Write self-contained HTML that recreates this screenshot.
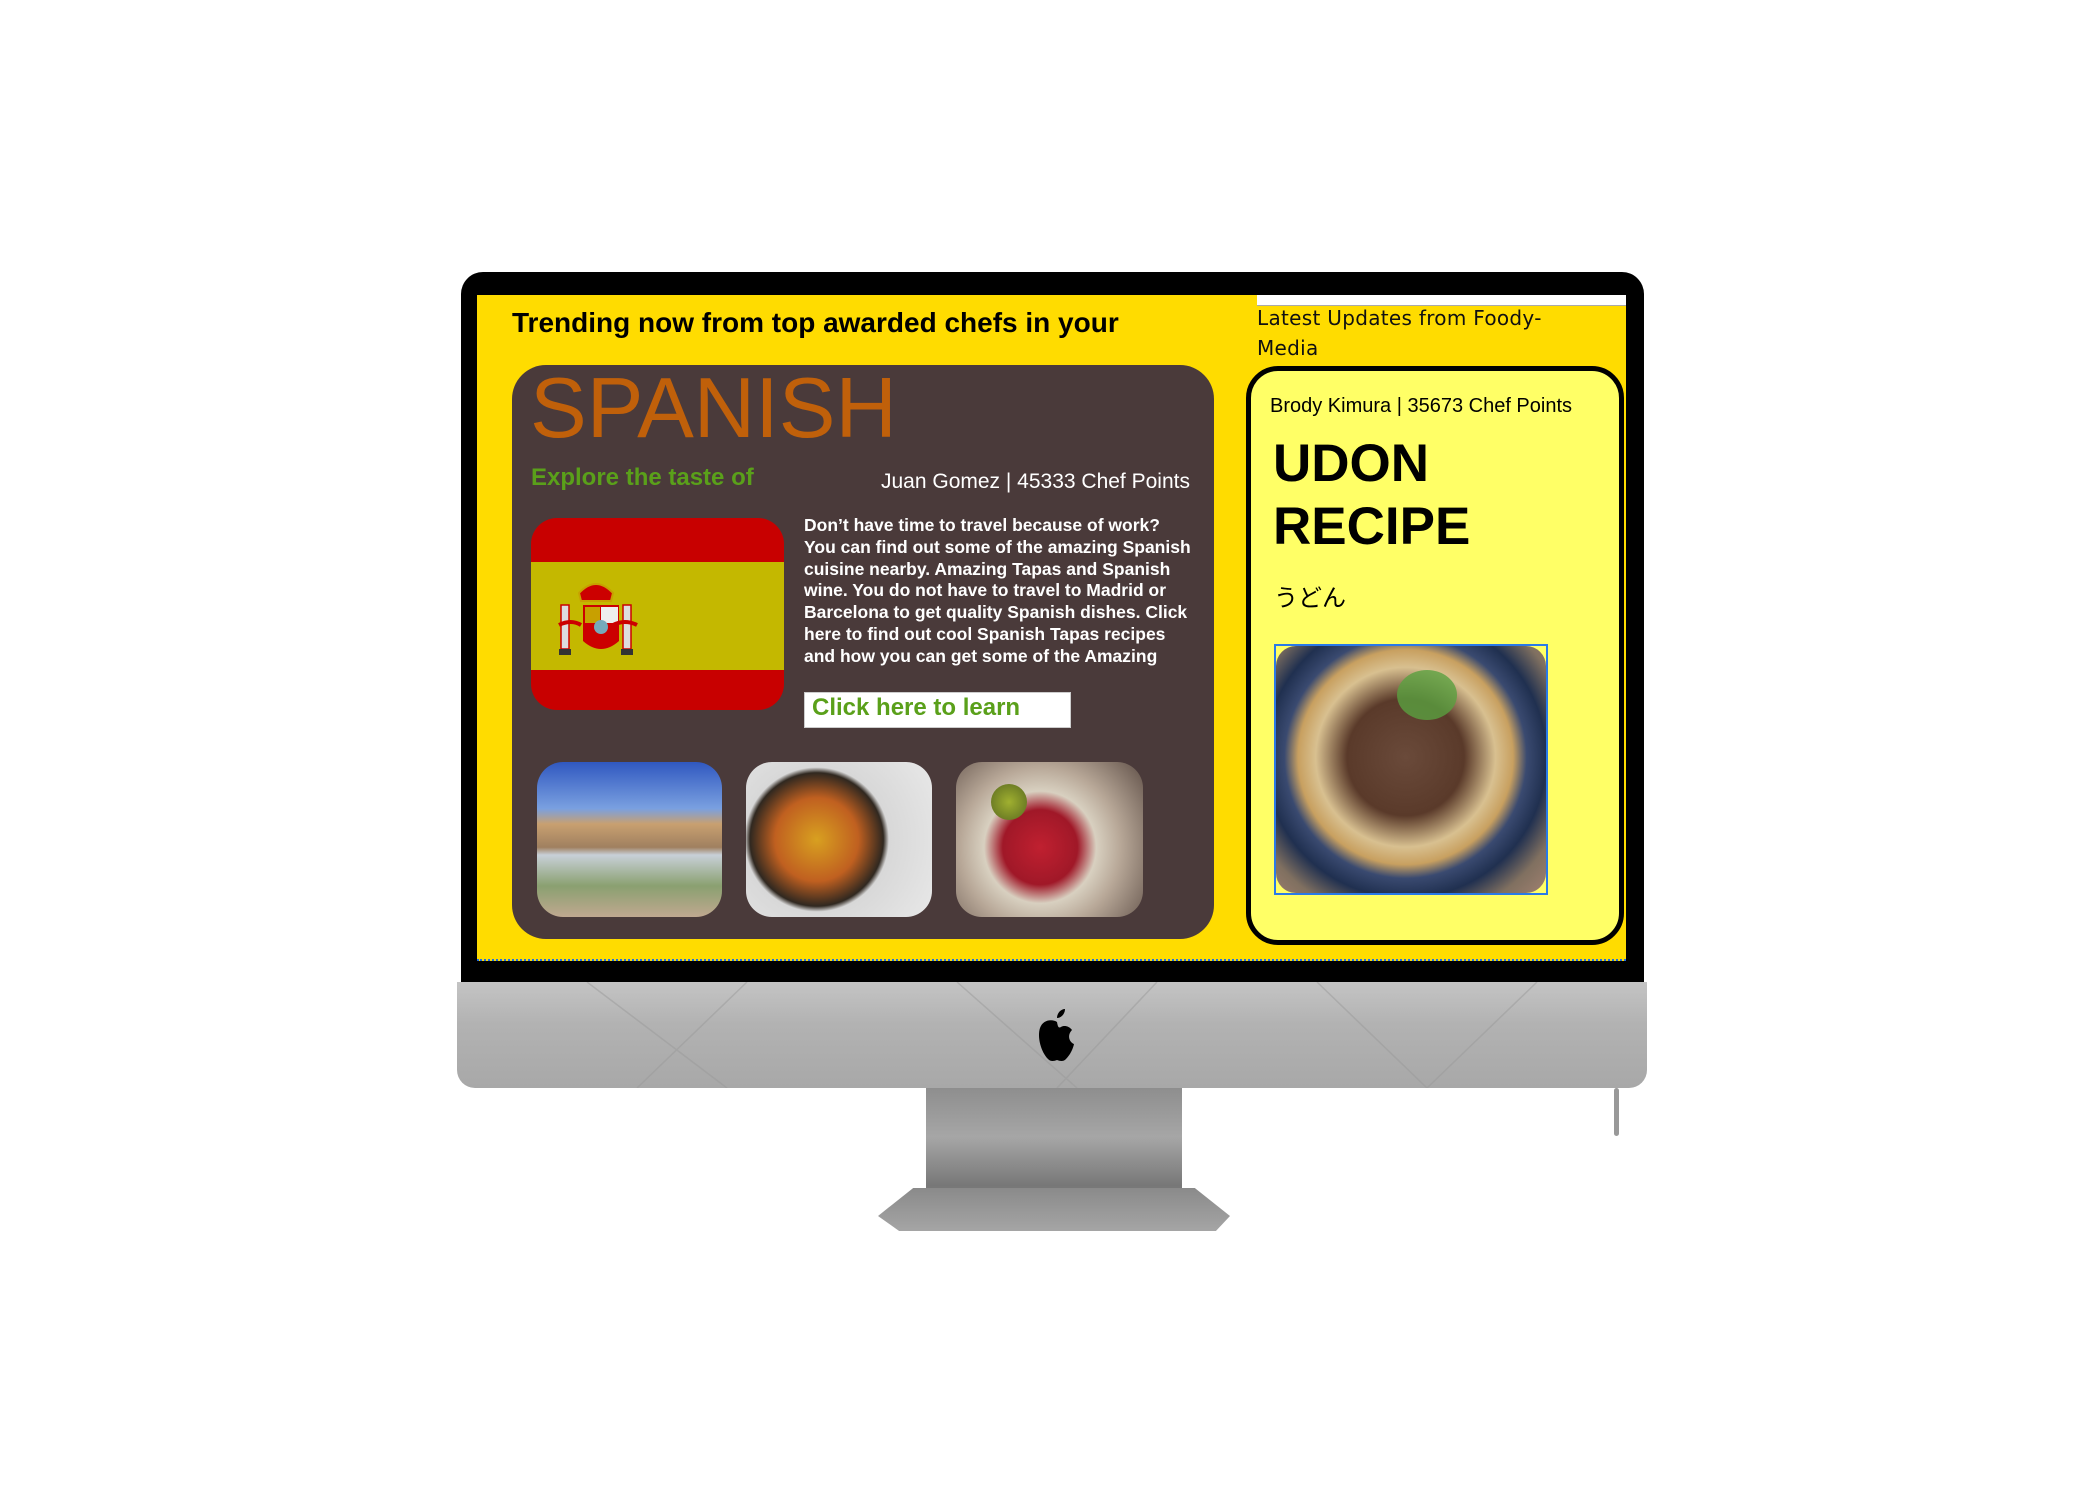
<!DOCTYPE html>
<html><head><meta charset="utf-8"><style>
*{margin:0;padding:0;box-sizing:border-box}
body{width:2100px;height:1500px;background:#fff;position:relative;overflow:hidden;font-family:"Liberation Sans",Arial,sans-serif}
.a{position:absolute}
.t{white-space:nowrap}
</style></head><body>
<div class="a" style="left:461px;top:272px;width:1183px;height:712px;background:#000;border-radius:22px 22px 0 0"></div>
<div class="a" style="left:457px;top:982px;width:1190px;height:106px;background:linear-gradient(#c4c4c4,#b2b2b2 40%,#a8a8a8);border-radius:0 0 18px 18px"></div>
<svg class="a" style="left:457px;top:982px" width="1190" height="106"><g stroke="#999" stroke-width="1.5" opacity=".5" fill="none"><path d="M130 0 L270 106 M290 0 L180 106 M500 0 L620 106 M700 0 L600 106 M860 0 L970 106 M1080 0 L970 106"/></g></svg>
<svg class="a" style="left:1034px;top:1007px" width="46" height="56" viewBox="0 0 46 56"><path d="M31 2c0 5-4 9-8 9 0-5 4-9 8-9z" fill="#000"/><path d="M23 15c-4-3-14-3-17 6-3 9 1 24 8 31 3 3 6 2 9 1 3 1 6 2 9-1 4-4 7-10 8-15-5-2-7-9-2-14-3-4-8-5-11-3-2 1-3 1-4-5z" fill="#000"/></svg>
<div class="a" style="left:926px;top:1088px;width:256px;height:140px;background:linear-gradient(#8e8e8e,#a6a6a6 35%,#777 70%,#999);clip-path:polygon(0 0,100% 0,102% 70%,118% 100%,-12% 100%,-2% 70%)"></div>
<div class="a" style="left:878px;top:1188px;width:352px;height:43px;background:linear-gradient(#8a8a8a,#a5a5a5);clip-path:polygon(10% 0,90% 0,100% 65%,96% 100%,6% 100%,0 65%)"></div>
<div class="a" style="left:1614px;top:1088px;width:5px;height:48px;background:#999;border-radius:3px"></div>
<div class="a" style="left:477px;top:295px;width:1149px;height:666px;background:#ffdc00;border-bottom:2px dotted #1e6ee8"></div>
<div class="a" style="left:1257px;top:295px;width:369px;height:11px;background:#fff;border-bottom:1px solid #aaa"></div>
<div class="a t" style="left:512px;top:307px;font-size:28px;font-weight:bold;color:#000">Trending now from top awarded chefs in your</div>
<div class="a" style="left:1257px;top:303px;font-family:'DejaVu Sans',sans-serif;font-size:20px;line-height:30px;color:#111;letter-spacing:.3px">Latest Updates from Foody-<br>Media</div>
<div class="a" style="left:512px;top:365px;width:702px;height:574px;background:#4a3a3a;border-radius:34px"></div>
<div class="a t" style="left:530px;top:361px;font-size:85px;color:#c0600a;line-height:96px">SPANISH</div>
<div class="a t" style="left:531px;top:464px;font-size:24px;font-weight:bold;color:#5aa01a">Explore the taste of</div>
<div class="a t" style="left:881px;top:470px;font-size:21px;color:#fff">Juan Gomez | 45333 Chef Points</div>
<div class="a" style="left:531px;top:518px;width:253px;height:192px;border-radius:26px;overflow:hidden;background:linear-gradient(#c80000 0 44px,#c4b800 44px 152px,#c80000 152px)"></div>
<svg class="a" style="left:557px;top:575px" width="84" height="90" viewBox="0 0 84 90"><rect x="4" y="30" width="8" height="44" fill="#ddd" stroke="#c00" stroke-width="1.5"/><rect x="66" y="30" width="8" height="44" fill="#ddd" stroke="#c00" stroke-width="1.5"/><path d="M22 18 Q39 0 56 18 L54 26 H24z" fill="#c00" stroke="#c8a000" stroke-width="2"/><path d="M26 30 H62 V66 Q44 82 26 66z" fill="#c00"/><rect x="44" y="32" width="17" height="16" fill="#eee"/><rect x="28" y="32" width="15" height="16" fill="#c8a000"/><circle cx="44" cy="52" r="7" fill="#7ab"/><path d="M2 50 Q14 44 24 50 M56 50 Q68 44 80 50" stroke="#c00" stroke-width="4" fill="none"/><rect x="2" y="74" width="12" height="6" fill="#333"/><rect x="64" y="74" width="12" height="6" fill="#333"/></svg>
<div class="a" style="left:804px;top:515px;width:392px;font-size:17.5px;font-weight:bold;line-height:21.8px;color:#fff">Don’t have time to travel because of work? You can find out some of the amazing Spanish cuisine nearby. Amazing Tapas and Spanish wine. You do not have to travel to Madrid or Barcelona to get quality Spanish dishes. Click here to find out cool Spanish Tapas recipes and how you can get some of the Amazing</div>
<div class="a t" style="left:804px;top:692px;width:267px;height:36px;background:#fff;border:1px solid #ccc;font-size:24px;font-weight:bold;color:#5aa01a;padding-left:7px;line-height:30px">Click here to learn</div>
<div class="a" style="left:537px;top:762px;width:185px;height:155px;border-radius:26px;background:linear-gradient(#3058c0 0,#7aa0e0 30%,#c8a070 40%,#a08060 55%,#c8d0d8 60%,#8aa070 80%,#c0a890 100%)"></div>
<div class="a" style="left:746px;top:762px;width:186px;height:155px;border-radius:26px;background:radial-gradient(circle at 38% 50%,#d8a020 0,#c06020 30%,#302820 48%,#d8d8d8 52%,#e8e8e8 100%)"></div>
<div class="a" style="left:956px;top:762px;width:187px;height:155px;border-radius:26px;background:radial-gradient(circle at 45% 55%,#c02030 0,#a01828 28%,#d8d0c0 42%,#b8a898 60%,#605048 100%)"></div>
<div class="a" style="left:991px;top:784px;width:36px;height:36px;border-radius:50%;background:radial-gradient(#a0b030,#5a6a20)"></div>
<div class="a" style="left:1246px;top:366px;width:378px;height:579px;background:#ffff66;border:5px solid #000;border-radius:32px"></div>
<div class="a t" style="left:1270px;top:395px;font-size:20px;color:#000">Brody Kimura | 35673 Chef Points</div>
<div class="a" style="left:1273px;top:432px;font-size:53px;font-weight:bold;line-height:63px;color:#000">UDON<br>RECIPE</div>
<div class="a t" style="left:1274px;top:578px;font-size:24px;color:#000;font-family:'Liberation Sans','Noto Sans CJK JP',sans-serif">うどん</div>
<div class="a" style="left:1274px;top:644px;width:274px;height:251px;border:2px solid #2a7ae8;background:#ffff66">
<div style="width:100%;height:100%;border-radius:20px;background:radial-gradient(circle at 48% 45%,#6a4a3a 0,#5a3a2a 30%,#d8c090 46%,#c8a060 55%,#3a4a70 62%,#203050 72%,#807060 85%,#a08070 100%)"></div></div>
<div class="a" style="left:1397px;top:670px;width:60px;height:50px;border-radius:50%;background:#5aa040;opacity:.8"></div>
</body></html>
